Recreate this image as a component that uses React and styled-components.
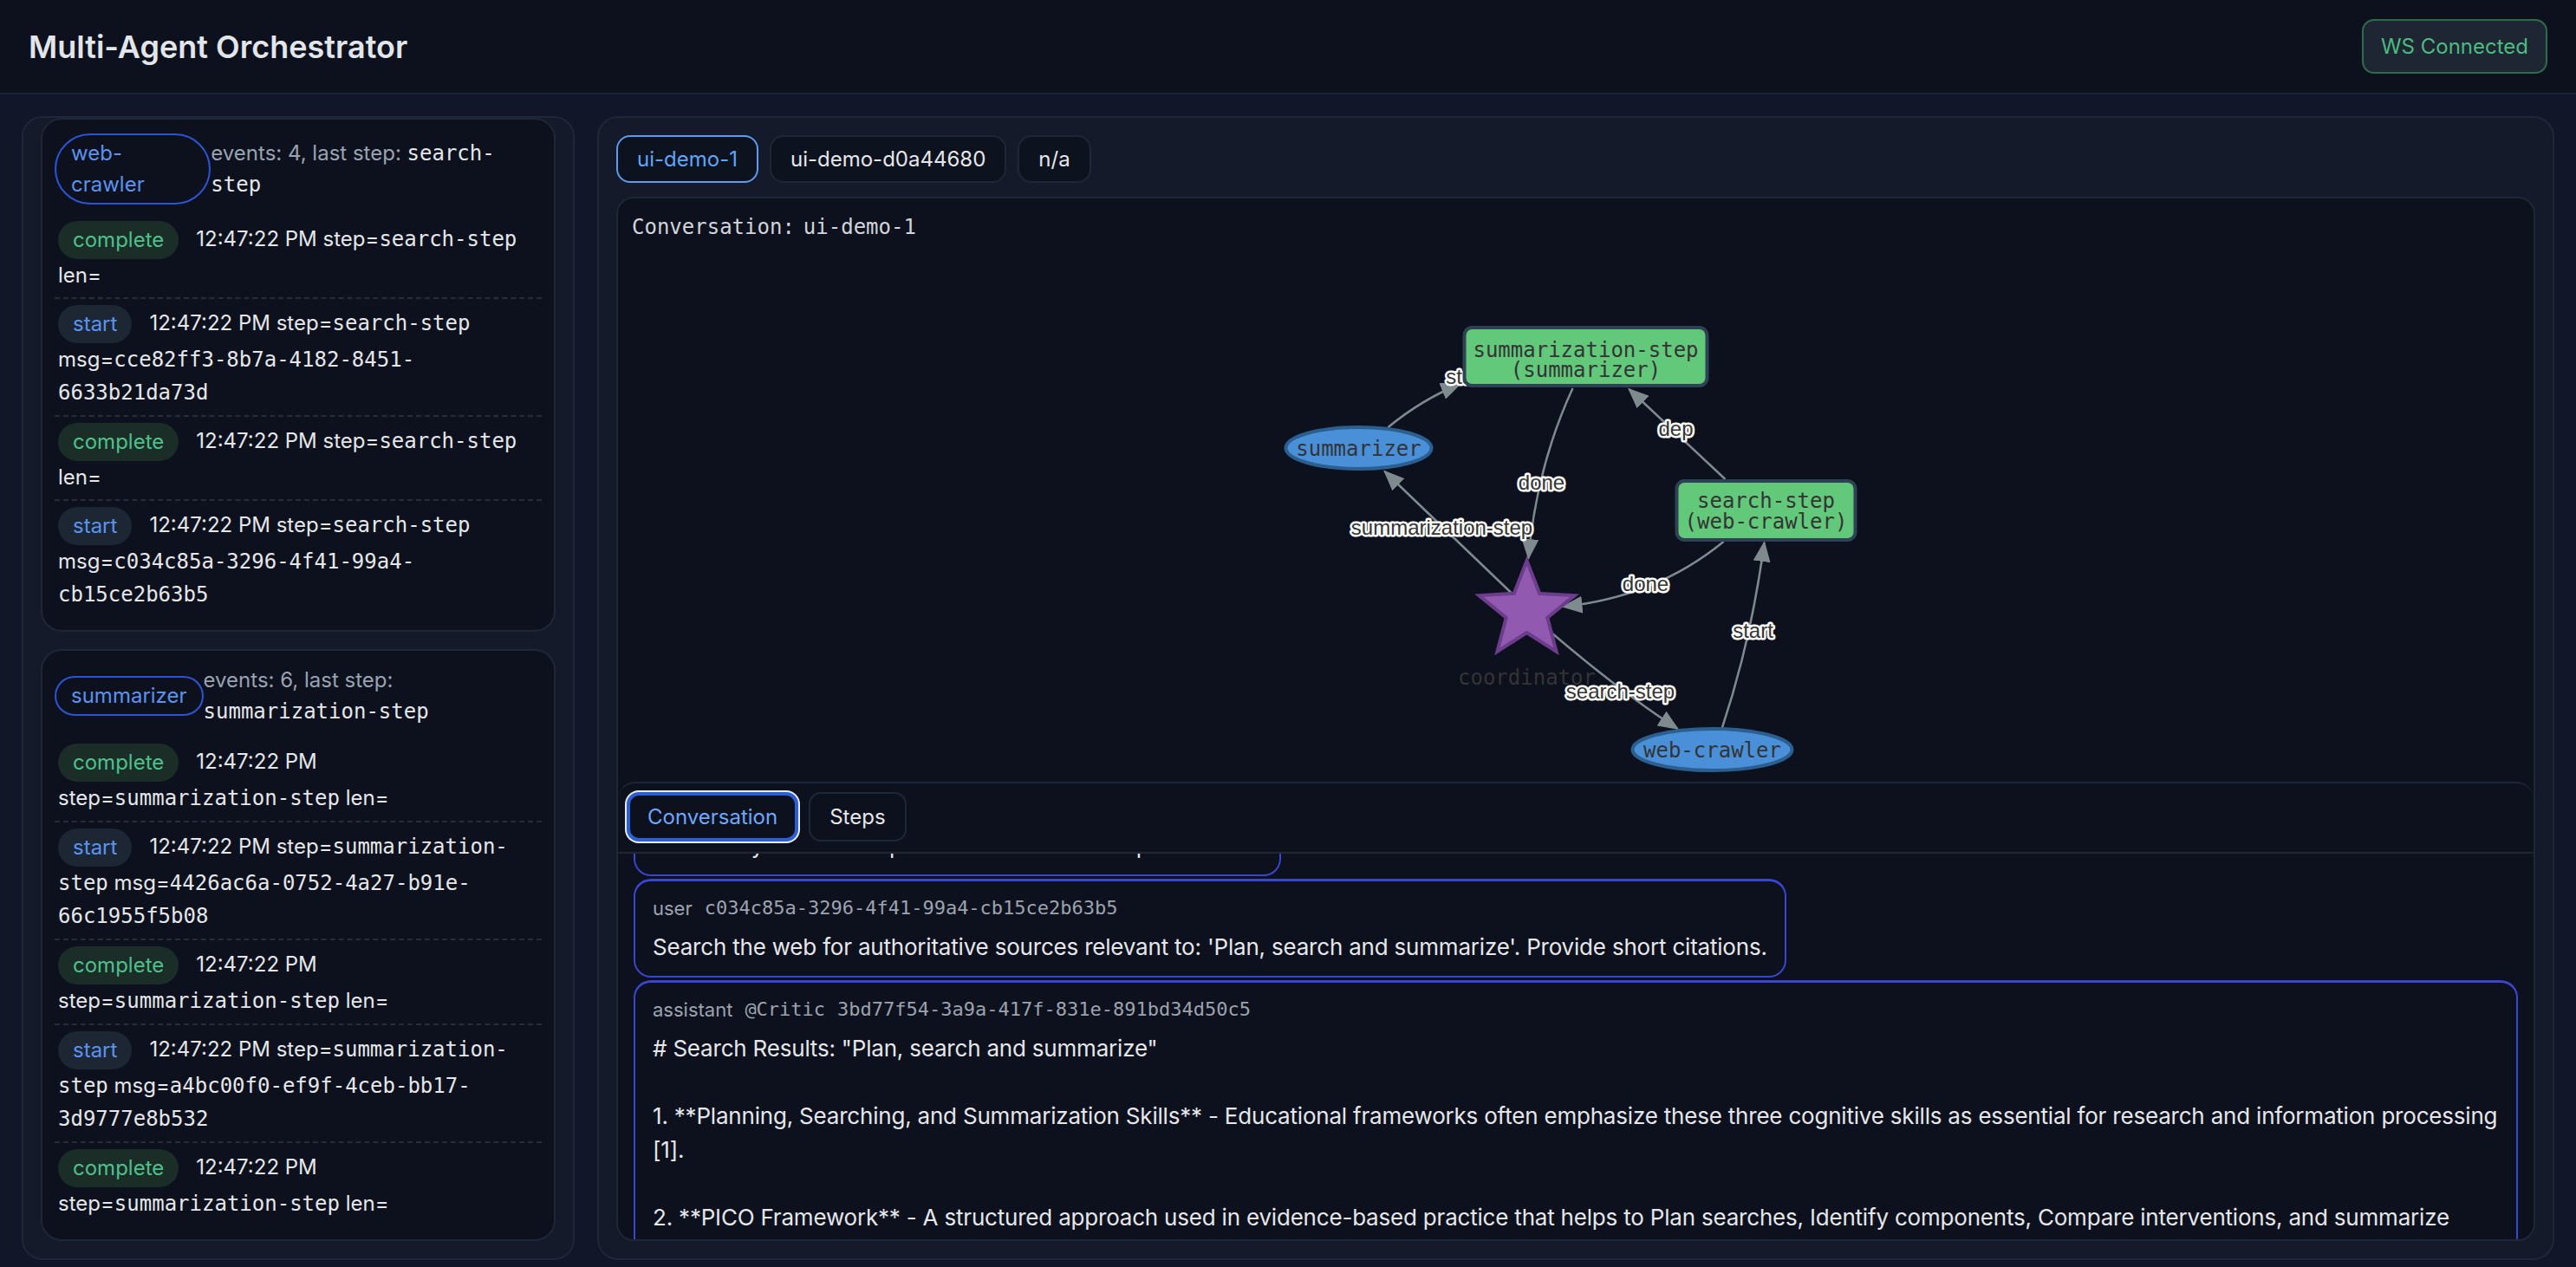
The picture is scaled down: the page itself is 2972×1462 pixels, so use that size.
import React, { useLayoutEffect, useRef } from "react";
import styled, { createGlobalStyle, css } from "styled-components";

const GlobalStyle = createGlobalStyle`
  html, body {
    margin: 0;
    padding: 0;
    background: #111729;
  }
  body {
    font-family: Inter, "Noto Sans", sans-serif;
    color: #e5e7eb;
  }
  * {
    box-sizing: border-box;
    scrollbar-width: none;
  }
  *::-webkit-scrollbar {
    display: none;
  }
`;

const MONO = `"DejaVu Sans Mono", "Liberation Mono", monospace`;

const Shell = styled.div`
  height: 100vh;
  display: flex;
  flex-direction: column;
`;

const TopBar = styled.header`
  flex: none;
  height: 109px;
  padding: 0 33px;
  display: flex;
  align-items: center;
  justify-content: space-between;
  background: #0c111d;
  border-bottom: 2px solid #1e2536;
`;

const Title = styled.h1`
  margin: 0;
  font-size: 36px;
  font-weight: 600;
  color: #e2e5ea;
`;

const WsBadge = styled.div`
  height: 63px;
  padding: 0 20px;
  display: flex;
  align-items: center;
  border: 2px solid #2c6e4c;
  border-radius: 14px;
  background: #1e2533;
  color: #4cbb7f;
  font-size: 24px;
`;

const Main = styled.main`
  flex: 1;
  min-height: 0;
  display: grid;
  grid-template-columns: 638px 1fr;
  gap: 26px;
  padding: 25px 25px 8px 25px;
`;

const Panel = styled.section`
  min-height: 0;
  border: 2px solid #1f2738;
  border-radius: 24px;
  background: #141a29;
  padding: 20px;
  display: flex;
  flex-direction: column;
`;

const AgentList = styled(Panel)`
  gap: 20px;
  overflow-y: auto;
`;

const AgentCard = styled.div`
  flex: none;
  background: #0c111d;
  border: 2px solid #1f2737;
  border-radius: 24px;
  padding: 16px 14px 15px;
`;

const AgentHead = styled.div`
  display: flex;
  align-items: center;
  margin-bottom: 12px;
`;

const AgentPill = styled.span`
  border: 2px solid #2b55d4;
  border-radius: 999px;
  padding: 3px 17px;
  color: #5b93f0;
  font-size: 24px;
  line-height: 36px;
`;

const AgentStats = styled.div`
  color: #9aa3b2;
  font-size: 24px;
  line-height: 36px;
`;

const Code = styled.span`
  font-family: ${MONO};
  font-size: 24px;
  color: #e5e7eb;
`;

const EventRow = styled.div`
  padding: 7px 4px;
  border-bottom: 2px dashed #252d3c;
  font-size: 24px;
  line-height: 37px;
  color: #e5e7eb;

  &:last-child {
    border-bottom: none;
  }
`;

const badgeColors = {
  complete: css`
    background: #1a2d27;
    color: #4fc08d;
  `,
  start: css`
    background: #1d2733;
    color: #5b93f0;
  `,
};

const Badge = styled.span`
  display: inline-block;
  vertical-align: middle;
  height: 44px;
  line-height: 44px;
  padding: 0 17px;
  margin-right: 20px;
  border-radius: 22px;
  font-size: 24px;
  ${(p) => badgeColors[p.$kind]}
`;

const Workspace = styled(Panel)`
  gap: 16px;
`;

const ConvPills = styled.div`
  flex: none;
  display: flex;
  gap: 13px;
`;

const ConvPill = styled.button`
  height: 55px;
  padding: 0 22px;
  border-radius: 16px;
  border: 2px solid ${(p) => (p.$active ? "#5b9cf0" : "#1f2737")};
  background: #0d121f;
  color: ${(p) => (p.$active ? "#60a5fa" : "#e5e7eb")};
  font-family: Inter, "Noto Sans", sans-serif;
  font-size: 24px;
`;

const GraphBox = styled.div`
  flex: 1;
  min-height: 0;
  display: flex;
  flex-direction: column;
  border: 2px solid #1f2737;
  border-radius: 20px;
  background: #0c111d;
  overflow: hidden;
`;

const GraphTitle = styled.div`
  flex: none;
  height: 70px;
  padding: 18px 16px 0;
  display: flex;
  gap: 10px;
  font-family: ${MONO};
  font-size: 24px;
  line-height: 30px;
  color: #d1d5db;
`;

const GraphCanvas = styled.svg`
  flex: none;
  display: block;
  width: 100%;
  height: 603px;
`;

const ConvPanel = styled.div`
  flex: 1;
  min-height: 0;
  display: flex;
  flex-direction: column;
  border-top: 2px solid #1f2737;
  border-radius: 20px 20px 0 0;
`;

const TabBar = styled.div`
  flex: none;
  display: flex;
  gap: 12px;
  padding: 10px 10px 12px;
  border-bottom: 2px solid #1f2737;
`;

const TabButton = styled.button`
  height: 57px;
  padding: 0 22px;
  border-radius: 14px;
  background: #0c111d;
  font-family: Inter, "Noto Sans", sans-serif;
  font-size: 24px;
  border: 2px solid #1f2737;
  color: #e5e7eb;
  ${(p) =>
    p.$active &&
    css`
      padding: 0 20px;
      border: 4px solid #2c5fd6;
      box-shadow: 0 0 0 2px #e8edf5;
      color: #6ea8fe;
    `}
`;

const Messages = styled.div`
  position: relative;
  flex: 1;
  min-height: 0;
  overflow-y: auto;
  padding: 0 18px 18px;
  display: flex;
  flex-direction: column;
  align-items: flex-start;
  gap: 3px;
`;

const MessageCard = styled.div`
  flex: none;
  max-width: 100%;
  border: 2px solid #3a45d0;
  border-top-width: 3px;
  border-radius: 20px;
  padding: 16px 20px 14px;
  background: #0c111d;
`;

const MessageMeta = styled.div`
  display: flex;
  gap: 14px;
  margin-bottom: 10px;
  font-size: 22px;
  line-height: 30px;
  color: #9ca3af;
`;

const MetaCode = styled.span`
  font-family: ${MONO};
  font-size: 22px;
`;

const MessageBody = styled.div`
  font-size: 26px;
  line-height: 39px;
  letter-spacing: -0.2px;
  white-space: pre-wrap;
  color: #e5e7eb;
`;

const agents = [
  {
    name: "web-crawler",
    count: 4,
    lastStep: "search-step",
    events: [
      { kind: "complete", step: "search-step", len: true },
      { kind: "start", step: "search-step", msg: "cce82ff3-8b7a-4182-8451-6633b21da73d" },
      { kind: "complete", step: "search-step", len: true },
      { kind: "start", step: "search-step", msg: "c034c85a-3296-4f41-99a4-cb15ce2b63b5" },
    ],
  },
  {
    name: "summarizer",
    count: 6,
    lastStep: "summarization-step",
    events: [
      { kind: "complete", step: "summarization-step", len: true },
      { kind: "start", step: "summarization-step", msg: "4426ac6a-0752-4a27-b91e-66c1955f5b08" },
      { kind: "complete", step: "summarization-step", len: true },
      { kind: "start", step: "summarization-step", msg: "a4bc00f0-ef9f-4ceb-bb17-3d9777e8b532" },
      { kind: "complete", step: "summarization-step", len: true },
    ],
  },
];

const messages = [
  {
    role: "assistant",
    agent: "@Planner",
    id: "9f1c2a7e-44d1-4b0a-9c3e-1d2f7a8b6e01",
    text: "Plan ready: search-step -> summarization-step",
  },
  {
    role: "user",
    id: "c034c85a-3296-4f41-99a4-cb15ce2b63b5",
    text: "Search the web for authoritative sources relevant to: 'Plan, search and summarize'. Provide short citations.",
    anchor: true,
  },
  {
    role: "assistant",
    agent: "@Critic",
    id: "3bd77f54-3a9a-417f-831e-891bd34d50c5",
    text: `# Search Results: "Plan, search and summarize"

1. **Planning, Searching, and Summarization Skills** - Educational frameworks often emphasize these three cognitive skills as essential for research and information processing [1].

2. **PICO Framework** - A structured approach used in evidence-based practice that helps to Plan searches, Identify components, Compare interventions, and summarize Outcomes [2].

3. **Research Process Models** - Information literacy models describe planning a search strategy, executing it, and synthesizing findings [3].`,
  },
];

const starPoints = (cx, cy, R, r) =>
  Array.from({ length: 10 }, (_, i) => {
    const a = ((-90 + i * 36) * Math.PI) / 180;
    const rad = i % 2 === 0 ? R : r;
    return `${(cx + rad * Math.cos(a)).toFixed(1)},${(cy + rad * Math.sin(a)).toFixed(1)}`;
  }).join(" ");

const edges = [
  { d: "M1601 494 Q1640 462 1684 444", label: "start", x: 1691, y: 435 },
  { d: "M1814 449 Q1772 540 1763 645", label: "done", x: 1778, y: 557 },
  { d: "M1744 686 L1597 545", label: "summarization-step", x: 1663, y: 609 },
  { d: "M1990 554 L1879 450", label: "dep", x: 1933, y: 495 },
  { d: "M1988 626 Q1910 690 1803 701", label: "done", x: 1898, y: 674 },
  { d: "M1787 729 Q1870 800 1935 842", label: "search-step", x: 1869, y: 798 },
  { d: "M1986 842 Q2020 740 2035 627", label: "start", x: 2022, y: 728 },
];

const Graph = () => (
  <GraphCanvas viewBox="713 300 2209 603">
    <defs>
      <marker
        id="arrow"
        viewBox="0 0 12 10"
        refX="11"
        refY="5"
        markerWidth="24"
        markerHeight="20"
        markerUnits="userSpaceOnUse"
        orient="auto"
      >
        <path d="M0 0 L12 5 L0 10 z" fill="#7f8a8f" />
      </marker>
    </defs>
    {edges.map((e, i) => (
      <path key={i} d={e.d} fill="none" stroke="#7f8a8f" strokeWidth="2.5" markerEnd="url(#arrow)" />
    ))}
    {edges.map((e, i) => (
      <text
        key={i}
        x={e.x}
        y={e.y}
        textAnchor="middle"
        dominantBaseline="central"
        fontFamily='"Liberation Sans", Arial, sans-serif'
        fontSize="24"
        fill="#343434"
        stroke="#ffffff"
        strokeWidth="5"
        strokeLinejoin="round"
        paintOrder="stroke"
      >
        {e.label}
      </text>
    ))}
    <g fontFamily={MONO} fontSize="24" fill="#343434" textAnchor="middle">
      <rect x="1689" y="379" width="280" height="67" rx="9" fill="#62c97b" stroke="#2f4254" strokeWidth="4" />
      <text x="1829" y="405" dominantBaseline="central">summarization-step</text>
      <text x="1829" y="428" dominantBaseline="central">(summarizer)</text>

      <rect x="1934" y="556" width="206" height="68" rx="9" fill="#62c97b" stroke="#2f4254" strokeWidth="4" />
      <text x="2037" y="579" dominantBaseline="central">search-step</text>
      <text x="2037" y="603" dominantBaseline="central">(web-crawler)</text>

      <ellipse cx="1567" cy="518" rx="84" ry="24" fill="#4a90d9" stroke="#2b5f8f" strokeWidth="4" />
      <text x="1567" y="519" dominantBaseline="central">summarizer</text>

      <ellipse cx="1975" cy="866" rx="92" ry="24" fill="#4a90d9" stroke="#2b5f8f" strokeWidth="4" />
      <text x="1975" y="867" dominantBaseline="central">web-crawler</text>

      <polygon points={starPoints(1761, 706, 58, 25)} fill="#9159b0" stroke="#6c3d8c" strokeWidth="4" />
      <text x="1761" y="783" dominantBaseline="central">coordinator</text>
    </g>
  </GraphCanvas>
);

const AgentBlock = ({ agent }) => (
  <AgentCard>
    <AgentHead>
      <AgentPill>{agent.name}</AgentPill>
      <AgentStats>
        events: {agent.count}, last step: <Code>{agent.lastStep}</Code>
      </AgentStats>
    </AgentHead>
    {agent.events.map((ev, i) => (
      <EventRow key={i}>
        <Badge $kind={ev.kind}>{ev.kind}</Badge>
        12:47:22 PM step=<Code>{ev.step}</Code>
        {ev.len ? " len=" : (
          <>
            {" "}msg=<Code>{ev.msg}</Code>
          </>
        )}
      </EventRow>
    ))}
  </AgentCard>
);

const App = () => {
  const agentListRef = useRef(null);
  const messagesRef = useRef(null);
  const anchorRef = useRef(null);

  useLayoutEffect(() => {
    const list = agentListRef.current;
    if (list) list.scrollTop = list.scrollHeight;
    const box = messagesRef.current;
    const anchor = anchorRef.current;
    if (box && anchor) box.scrollTop = anchor.offsetTop - 29;
  }, []);

  return (
    <Shell>
      <GlobalStyle />
      <TopBar>
        <Title>Multi-Agent Orchestrator</Title>
        <WsBadge>WS Connected</WsBadge>
      </TopBar>
      <Main>
        <AgentList ref={agentListRef}>
          {agents.map((a) => (
            <AgentBlock key={a.name} agent={a} />
          ))}
        </AgentList>
        <Workspace>
          <ConvPills>
            <ConvPill $active>ui-demo-1</ConvPill>
            <ConvPill>ui-demo-d0a44680</ConvPill>
            <ConvPill>n/a</ConvPill>
          </ConvPills>
          <GraphBox>
            <GraphTitle>
              <span>Conversation:</span>
              <span>ui-demo-1</span>
            </GraphTitle>
            <Graph />
            <ConvPanel>
              <TabBar>
                <TabButton $active>Conversation</TabButton>
                <TabButton>Steps</TabButton>
              </TabBar>
              <Messages ref={messagesRef}>
                {messages.map((m) => (
                  <MessageCard key={m.id} ref={m.anchor ? anchorRef : undefined}>
                    <MessageMeta>
                      <span>{m.role}</span>
                      {m.agent && <MetaCode>{m.agent}</MetaCode>}
                      <MetaCode>{m.id}</MetaCode>
                    </MessageMeta>
                    <MessageBody>{m.text}</MessageBody>
                  </MessageCard>
                ))}
              </Messages>
            </ConvPanel>
          </GraphBox>
        </Workspace>
      </Main>
    </Shell>
  );
};

export default App;
